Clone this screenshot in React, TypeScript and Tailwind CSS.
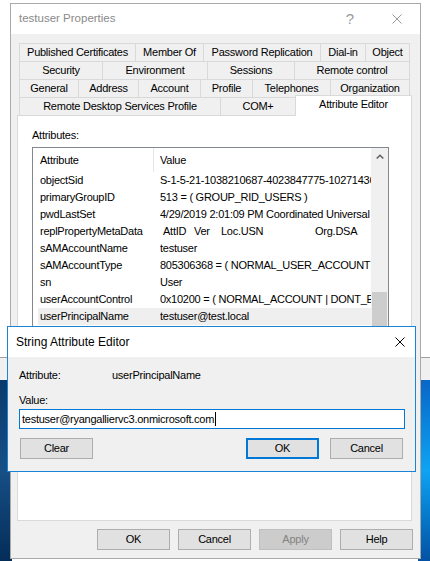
import React from 'react';

const tabRows: [string, number][][] = [
  [
    ['Published Certificates', 117],
    ['Member Of', 69],
    ['Password Replication', 118],
    ['Dial-in', 46],
    ['Object', 45],
  ],
  [
    ['Security', 84],
    ['Environment', 106],
    ['Sessions', 88],
    ['Remote control', 116],
  ],
  [
    ['General', 60],
    ['Address', 61],
    ['Account', 63],
    ['Profile', 53],
    ['Telephones', 79],
    ['Organization', 80],
  ],
];

const attributes: [string, string][] = [
  ['objectSid', 'S-1-5-21-1038210687-4023847775-1027143608-1104'],
  ['primaryGroupID', '513 = ( GROUP_RID_USERS )'],
  ['pwdLastSet', '4/29/2019 2:01:09 PM Coordinated Universal Time'],
  ['replPropertyMetaData', ''],
  ['sAMAccountName', 'testuser'],
  ['sAMAccountType', '805306368 = ( NORMAL_USER_ACCOUNT )'],
  ['sn', 'User'],
  ['userAccountControl', '0x10200 = ( NORMAL_ACCOUNT | DONT_EXPIRE_PASSWD )'],
  ['userPrincipalName', 'testuser@test.local'],
  ['uSNChanged', '41017'],
  ['uSNCreated', '40993'],
  ['whenChanged', '4/29/2019 9:01:09 AM Central Daylight Time'],
  ['whenCreated', '4/29/2019 9:00:58 AM Central Daylight Time'],
];

function Tab({ label, width, first }: { label: string; width: number; first: boolean }) {
  return (
    <div
      className={`h-[18px] flex items-center justify-center border-t border-l border-r border-[#d9d9d9] bg-[#f0f0f0] whitespace-nowrap ${first ? '' : '-ml-px'}`}
      style={{ width }}
    >
      {label}
    </div>
  );
}

function Button({ label, disabled, primary }: { label: string; disabled?: boolean; primary?: boolean }) {
  let cls = 'border border-[#adadad] bg-[#e1e1e1] text-black';
  if (disabled) cls = 'border border-[#bfbfbf] bg-[#cccccc] text-[#838383]';
  if (primary) cls = 'border-2 border-[#0078d7] bg-[#e1e1e1] text-black';
  return (
    <div className={`w-[73px] h-[21px] flex items-center justify-center ${cls}`}>{label}</div>
  );
}

function CloseIcon({ color, size }: { color: string; size: number }) {
  return (
    <svg width={size} height={size} viewBox="0 0 10 10" fill="none">
      <path d="M0.5 0.5L9.5 9.5M9.5 0.5L0.5 9.5" stroke={color} strokeWidth="1" />
    </svg>
  );
}

export default function App() {
  return (
    <div className="relative w-[430px] h-[561px] overflow-hidden bg-white font-['Liberation_Sans',Arial,sans-serif] text-[11px] tracking-[-0.25px] text-black">
      {/* desktop behind the windows */}
      <div className="absolute top-[357px] left-0 right-0 h-[23px] border-t border-[#a0a0a0] bg-[#f0f0f0]" />
      <div className="absolute top-[380px] left-0 bottom-0 w-[12px] bg-linear-to-b from-[#0a3a6b] via-[#174f86] to-[#052d58]" />
      <div className="absolute top-[380px] right-0 bottom-0 w-[12px] bg-linear-to-b from-[#0a67c6] via-[#10a3f3] to-[#0551a4]" />

      {/* testuser Properties */}
      <div className="absolute left-[10px] top-[3px] w-[411px] h-[556px] border border-[#aaaaaa] bg-[#f0f0f0] flex flex-col">
        <div className="h-[30px] bg-white flex items-center pl-[8px] pr-[18px]">
          <span className="text-[11.5px] tracking-normal text-[#8a8a8a] flex-1">testuser Properties</span>
          <span className="text-[15px] tracking-normal text-[#9a9a9a] mr-[38px]">?</span>
          <CloseIcon color="#9a9a9a" size={10} />
        </div>

        <div className="flex-1 pt-[9px] pl-[6px] pr-[8px]">
          <div className="ml-[2px]">
            {tabRows.map((row, r) => (
              <div key={r} className="flex">
                {row.map(([label, w], i) => (
                  <Tab key={label} label={label} width={w} first={i === 0} />
                ))}
              </div>
            ))}
            <div className="flex h-[18px] items-end">
              <Tab label="Remote Desktop Services Profile" width={202} first />
              <Tab label="COM+" width={76} first={false} />
              <div className="-ml-px relative top-[1px] z-10 w-[117px] h-[21px] pb-[3px] flex items-center justify-center bg-white border-t border-l border-r border-[#d9d9d9]">
                Attribute Editor
              </div>
            </div>
          </div>

          <div className="w-[395px] h-[406px] border border-[#d9d9d9] bg-white pl-[14px] pt-[12px] overflow-hidden">
            <div className="leading-[14px]">Attributes:</div>
            <div className="mt-[5px] w-[357px] h-[320px] border border-[#828790] flex">
              <div className="w-[338px] flex flex-col">
                <div className="h-[24px] flex items-stretch">
                  <div className="w-[121px] border-r border-[#e5e5e5] pl-[7px] flex items-center">Attribute</div>
                  <div className="pl-[6px] flex items-center">Value</div>
                </div>
                <div className="pl-[5px]">
                  {attributes.map(([name, value]) => (
                    <div
                      key={name}
                      className={`h-[17px] flex items-center whitespace-nowrap ${name === 'userPrincipalName' ? 'bg-[#efefef]' : ''}`}
                    >
                      <div className="w-[122px] pl-[2px] shrink-0">{name}</div>
                      {name === 'replPropertyMetaData' ? (
                        <div className="flex pl-[3px]">
                          <span className="w-[31px]">AttID</span>
                          <span className="w-[27px]">Ver</span>
                          <span className="w-[94px]">Loc.USN</span>
                          <span>Org.DSA</span>
                        </div>
                      ) : (
                        <div className="flex-1 overflow-hidden">{value}</div>
                      )}
                    </div>
                  ))}
                </div>
              </div>
              <div className="w-[17px] bg-[#f0f0f0] flex flex-col">
                <div className="h-[17px] flex items-center justify-center">
                  <svg width="8" height="5" viewBox="0 0 8 5" fill="none">
                    <path d="M0.7 4.5L4 1.2L7.3 4.5" stroke="#606060" strokeWidth="1.5" />
                  </svg>
                </div>
                <div className="mt-[127px] ml-px w-[15px] h-[150px] bg-[#cdcdcd]" />
              </div>
            </div>
          </div>

          <div className="mt-[8px] -mr-px flex justify-end gap-[8px]">
            <Button label="OK" />
            <Button label="Cancel" />
            <Button label="Apply" disabled />
            <Button label="Help" />
          </div>
        </div>
      </div>

      {/* String Attribute Editor */}
      <div className="absolute left-[7px] top-[326px] w-[409px] h-[146px] border border-[#1883d7] bg-[#f0f0f0] flex flex-col">
        <div className="h-[30px] bg-white flex items-center pl-[8px] pr-[10px]">
          <span className="flex-1 text-[12px] tracking-normal">String Attribute Editor</span>
          <CloseIcon color="#000000" size={10} />
        </div>
        <div className="pl-[11px] pt-[11px]">
          <div className="flex leading-[14px]">
            <span className="w-[93px]">Attribute:</span>
            <span>userPrincipalName</span>
          </div>
          <div className="mt-[11px] leading-[14px]">Value:</div>
          <div className="mt-[2px] w-[386px] h-[20px] border border-[#0078d7] bg-white flex items-center pl-[2px]">
            <span>testuser@ryangalliervc3.onmicrosoft.com</span>
            <span className="ml-px w-px h-[14px] bg-black" />
          </div>
          <div className="mt-[9px] flex pl-px pr-[12px]">
            <Button label="Clear" />
            <div className="flex-1" />
            <div className="flex gap-[11px]">
              <Button label="OK" primary />
              <Button label="Cancel" />
            </div>
          </div>
        </div>
      </div>
    </div>
  );
}
